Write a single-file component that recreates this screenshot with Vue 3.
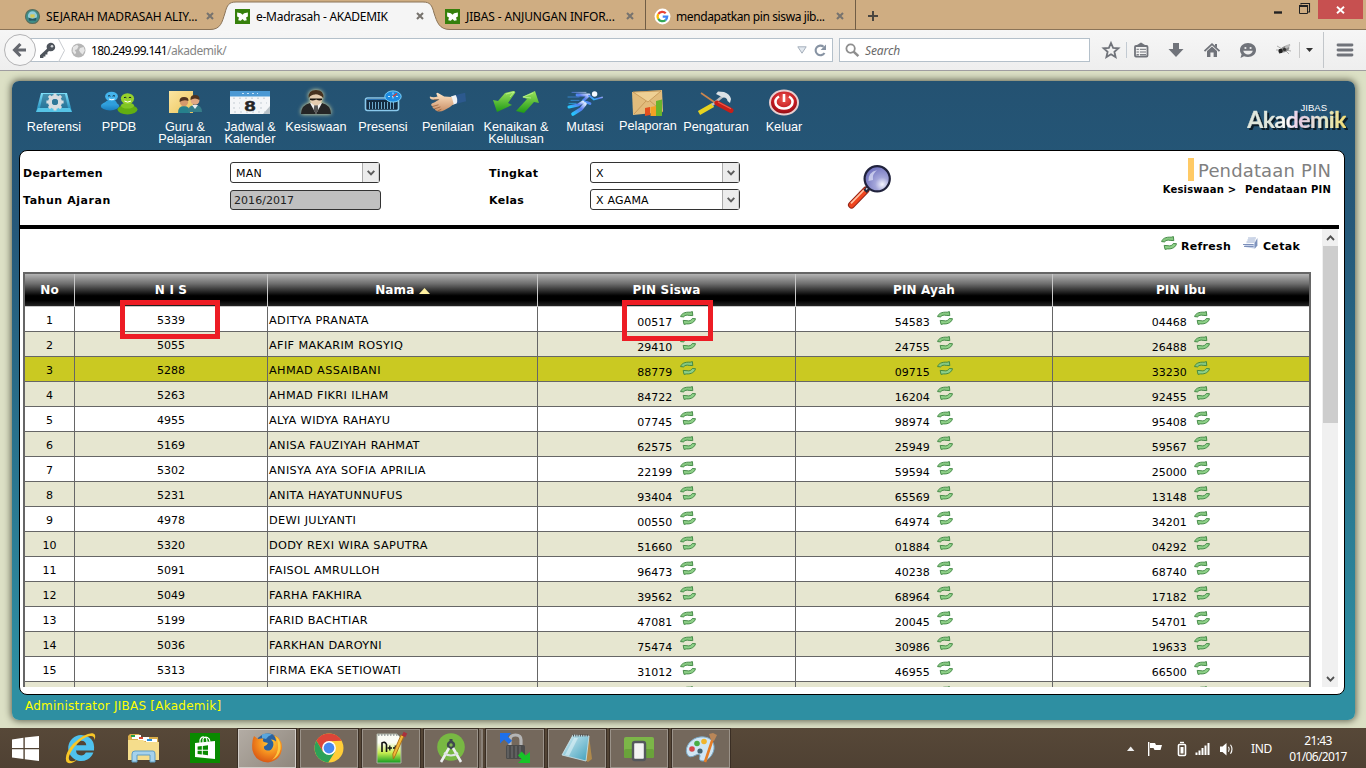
<script setup>
const rows = [
  ['5339', 'ADITYA PRANATA', '00517', '54583', '04468'],
  ['5055', 'AFIF MAKARIM ROSYIQ', '29410', '24755', '26488'],
  ['5288', 'AHMAD ASSAIBANI', '88779', '09715', '33230'],
  ['5263', 'AHMAD FIKRI ILHAM', '84722', '16204', '92455'],
  ['4955', 'ALYA WIDYA RAHAYU', '07745', '98974', '95408'],
  ['5169', 'ANISA FAUZIYAH RAHMAT', '62575', '25949', '59567'],
  ['5302', 'ANISYA AYA SOFIA APRILIA', '22199', '59594', '25000'],
  ['5231', 'ANITA HAYATUNNUFUS', '93404', '65569', '13148'],
  ['4978', 'DEWI JULYANTI', '00550', '64974', '34201'],
  ['5320', 'DODY REXI WIRA SAPUTRA', '51660', '01884', '04292'],
  ['5091', 'FAISOL AMRULLOH', '96473', '40238', '68740'],
  ['5049', 'FARHA FAKHIRA', '39562', '68964', '17182'],
  ['5199', 'FARID BACHTIAR', '47081', '20045', '54701'],
  ['5036', 'FARKHAN DAROYNI', '75474', '30986', '19633'],
  ['5313', 'FIRMA EKA SETIOWATI', '31012', '46955', '66500'],
  ['', '', '', '', '']
]
</script>

<template>
  <div class="screen">
    <svg class="defs" width="0" height="0">
      <defs>
        <linearGradient id="gGreen" x1="0" y1="0" x2="0" y2="1"><stop offset="0" stop-color="#5fb45c" /><stop offset=".5" stop-color="#98d690" /><stop offset="1" stop-color="#5aa85a" /></linearGradient>
        <linearGradient id="gBlue" x1="0" y1="0" x2="0" y2="1"><stop offset="0" stop-color="#7fe0fa" /><stop offset="1" stop-color="#1683b4" /></linearGradient>
        <linearGradient id="gBody" x1="0" y1="0" x2="0" y2="1"><stop offset="0" stop-color="#3cb0ea" /><stop offset="1" stop-color="#1a7fc0" /></linearGradient>
        <linearGradient id="gLime" x1="0" y1="0" x2="0" y2="1"><stop offset="0" stop-color="#9be25c" /><stop offset="1" stop-color="#1f9a16" /></linearGradient>
        <linearGradient id="gSand" x1="0" y1="0" x2="1" y2="1"><stop offset="0" stop-color="#fbe6a2" /><stop offset="1" stop-color="#edc55c" /></linearGradient>
        <linearGradient id="gSkin" x1="0" y1="0" x2="0" y2="1"><stop offset="0" stop-color="#ffe4c4" /><stop offset="1" stop-color="#c98f66" /></linearGradient>
        <linearGradient id="gRun" x1="0" y1="1" x2="1" y2="0"><stop offset="0" stop-color="#25c8ff" /><stop offset=".6" stop-color="#5a7cf0" /><stop offset="1" stop-color="#d8e6ff" /></linearGradient>
        <radialGradient id="gRed" cx=".5" cy=".35" r=".7"><stop offset="0" stop-color="#f05a50" /><stop offset=".6" stop-color="#c01820" /><stop offset="1" stop-color="#7c0a10" /></radialGradient>
        <radialGradient id="gLens" cx=".7" cy=".72" r=".8"><stop offset="0" stop-color="#f4f5ff" /><stop offset=".35" stop-color="#a4a6da" /><stop offset="1" stop-color="#6a6cba" /></radialGradient>
        <linearGradient id="gPage" x1="0" y1="0" x2="1" y2="1"><stop offset="0" stop-color="#d8f0f6" /><stop offset="1" stop-color="#3f9fbb" /></linearGradient>
        <linearGradient id="gNpp" x1="0" y1="0" x2="0" y2="1"><stop offset=".3" stop-color="#fbfcf4" /><stop offset=".65" stop-color="#c8ee50" /><stop offset="1" stop-color="#0f9a20" /></linearGradient>
        <radialGradient id="gFox" cx=".6" cy=".3" r=".8"><stop offset="0" stop-color="#ffcf3a" /><stop offset=".5" stop-color="#f38b1e" /><stop offset="1" stop-color="#d24a12" /></radialGradient>
      </defs>
      <symbol id="refresh" viewBox="0 0 16 14">
        <path d="M.6 5.6C1.4 2.6 4.6 .8 10.2 1.2L12.4 .6L12.8 4.6L9.2 4.4C6.6 3.8 5 4.2 3.6 5.9Z" fill="#86c880" stroke="#3b823e" stroke-width=".9" stroke-linejoin="round" />
        <path d="M15.5 7.7C14.8 10.8 11.6 13.3 6.4 12.9L4 13.4L3.2 9.4L7 9.7C9.6 10.3 11.2 9.4 12.3 7.5Z" fill="#8ed088" stroke="#3b823e" stroke-width=".9" stroke-linejoin="round" />
      </symbol>
      <symbol id="butterfly" viewBox="0 0 14 14">
        <rect width="14" height="14" fill="#36800c" />
        <path d="M2 3.2L5.5 4L7 5.4L8.5 4L12 3.2V7L10.3 8L11 10.4L8.6 11L7 9.4L5.4 11L3 10.4L3.7 8L2 7Z" fill="#fff" />
      </symbol>
      <symbol id="close" viewBox="0 0 8 8"><path d="M1 1L7 7M7 1L1 7" stroke="#77736e" stroke-width="2.1" fill="none" /></symbol>
      <symbol id="chev" viewBox="0 0 8 6"><path d="M.7 .8L4 4.4L7.3 .8" stroke="#5c5c5c" stroke-width="1.9" fill="none" /></symbol>
    </svg>

    <header class="tabs">
      <div class="tab">
        <svg class="fav" viewBox="0 0 14 14"><circle cx="7" cy="7" r="6.6" fill="#3e8d88" stroke="#5b6d5c" /><circle cx="7" cy="6.5" r="4.3" fill="#92cbd8" /><path d="M3 8Q7 10 11 8L10 11H4Z" fill="#245a62" /><path d="M5 5H9V8H5Z" fill="#d5c850" /></svg>
        <span class="tt t1">SEJARAH MADRASAH ALIY...</span>
        <svg class="cls"><use href="#close" /></svg>
      </div>
      <div class="tab active">
        <svg class="shape" width="240" height="31" viewBox="0 0 240 31"><path d="M0 31V29.5C11 29.5 12 22 15 13C17 5 19 2 26 2H213C220 2 222 5 224 13C227 22 229 29.5 240 29.5V31Z" fill="#f5f5f5" /><path d="M0 29.5C11 29.5 12 22 15 13C17 5 19 2 26 2H213C220 2 222 5 224 13C227 22 229 29.5 240 29.5" fill="none" stroke="#8b7458" /></svg>
        <svg class="fav"><use href="#butterfly" /></svg>
        <span class="tt t2">e-Madrasah - AKADEMIK</span>
        <svg class="cls"><use href="#close" /></svg>
      </div>
      <div class="tab">
        <svg class="fav"><use href="#butterfly" /></svg>
        <span class="tt t3">JIBAS - ANJUNGAN INFOR...</span>
        <svg class="cls"><use href="#close" /></svg>
      </div>
      <div class="tab sep">
        <svg class="fav" viewBox="0 0 14 14"><circle cx="7" cy="7" r="7.4" fill="#fff" /><g fill="none" stroke-width="2.1"><path d="M3.2 4.6A4.4 4.4 0 0 1 10 3.9" stroke="#ea4335" /><path d="M3.1 9.3A4.4 4.4 0 0 1 3.1 4.7" stroke="#fbbc05" /><path d="M3.1 9.2A4.4 4.4 0 0 0 9.8 10.3" stroke="#34a853" /><path d="M7.2 7H11.4A4.3 4.3 0 0 1 9.8 10.3" stroke="#4285f4" /></g></svg>
        <span class="tt t4">mendapatkan pin siswa jib...</span>
        <svg class="cls"><use href="#close" /></svg>
      </div>
      <div class="plus"><svg width="12" height="12"><path d="M6 1V11M1 6H11" stroke="#4a4640" stroke-width="2" /></svg></div>
      <div class="winbtns">
        <svg width="80" height="20" viewBox="0 0 80 20"><path d="M1 12.5H9" stroke="#222" stroke-width="2.4" /><path d="M26.5 5.5H34.5V13.5H26.5Z" stroke="#222" fill="none" /><path d="M26 6H35" stroke="#222" stroke-width="2" /><path d="M28 4.5V3.5H36.5V12H35" stroke="#222" stroke-width="1.1" fill="none" /></svg>
        <div class="x"><svg width="9" height="8" viewBox="0 0 9 8"><path d="M1 .8L8 7.2M8 .8L1 7.2" stroke="#fff" stroke-width="1.9" /></svg></div>
      </div>
    </header>

    <div class="nav">
      <div class="back"><svg width="16" height="16" viewBox="0 0 16 16"><path d="M8.4 2L2.6 8L8.4 14M3 8H14" fill="none" stroke="#65686f" stroke-width="3.2" /></svg></div>
      <div class="url">
        <svg class="key" width="17" height="17" viewBox="0 0 17 17"><path d="M1 16V13.2L8 6.8Q6.8 3.8 9.2 1.8Q12 -.2 14.8 2Q17.4 5 15.2 7.8Q13 10 10 9L8.4 10.6V12.4H6.4V14.4H4.4V16Z" fill="#4e545c" /><circle cx="13" cy="4.2" r="1.3" fill="#d5d8dc" /></svg>
        <svg class="crumb" width="9" height="23" viewBox="0 0 9 23"><path d="M1.5 0L7.5 11.5L1.5 23" fill="none" stroke="#c9ccd0" /></svg>
        <svg class="globe" width="15" height="15" viewBox="0 0 15 15"><circle cx="7.5" cy="7.5" r="7" fill="#b5b5b5" /><path d="M2 4L6 1.8L7.5 3.6L6 6.3L3.8 7L5.2 9.4L4 11.4L1.6 8.4ZM9 5L12.6 4L13.8 7.6L11.6 11.4L9.4 9.6L8 7.2Z" fill="#e6e6e6" /></svg>
        <span class="addr"><b>180.249.99.141</b>/akademik/</span>
        <svg class="drop" width="10" height="8" viewBox="0 0 10 8"><path d="M.8 .8H9.2L5 7.2Z" fill="#e3e9ef" stroke="#a6b0bc" /></svg>
        <svg class="reload" width="13" height="13" viewBox="0 0 13 13"><path d="M10.5 9A4.8 4.8 0 1 1 9.6 2.8" fill="none" stroke="#8793a3" stroke-width="2.1" /><path d="M12 .6V6H6.6Z" fill="#8793a3" /></svg>
      </div>
      <div class="search"><svg width="15" height="15" viewBox="0 0 15 15"><circle cx="5.6" cy="5.6" r="4.2" fill="none" stroke="#8e8e8e" stroke-width="1.8" /><path d="M8.6 8.6L13.4 13.2" stroke="#8e8e8e" stroke-width="2.5" /></svg><i>Search</i></div>
      <svg class="tools" width="276" height="40" viewBox="1090 30 276 40">
        <path d="M1111 43L1113.1 47.9L1118.4 48.3L1114.4 51.8L1115.6 57L1111 54.2L1106.4 57L1107.6 51.8L1103.6 48.3L1108.9 47.9Z" fill="none" stroke="#70737a" stroke-width="1.8" />
        <path d="M1126.5 42V58" stroke="#c2cad2" /><path d="M1299.5 42V58" stroke="#c8c8c8" /><path d="M1323.5 32V68" stroke="#c2c6ca" />
        <rect x="1135" y="46" width="12.5" height="10.5" rx="1" fill="none" stroke="#70737a" stroke-width="1.8" /><path d="M1137 45L1141 42.5L1145 45V46H1137Z" fill="#70737a" /><path d="M1136.5 49.3H1146M1136.5 52H1146M1136.5 54.6H1146" stroke="#70737a" /><path d="M1139.4 47V56" stroke="#f3f3f3" />
        <path d="M1173 43H1179V49H1183.5L1176 57L1168.5 49H1173Z" fill="#70737a" />
        <path d="M1204.5 51.2L1212 44.2L1219.5 51.2" fill="none" stroke="#70737a" stroke-width="1.8" /><path d="M1207 51L1212 46.5L1217 51V57H1213.6V52.5H1210.4V57H1207Z" fill="#70737a" /><path d="M1215 44H1217V48L1215 46Z" fill="#70737a" />
        <path d="M1248 43C1252.6 43 1256 46 1256 50S1252.6 57 1248 57C1246.5 57 1245.3 56.7 1244 56.2L1240.5 58L1241.6 54.2C1240.6 53 1240 51.6 1240 50C1240 46 1243.4 43 1248 43Z" fill="#70737a" /><circle cx="1245.4" cy="48" r="1.1" fill="#eee" /><circle cx="1250.6" cy="48" r="1.1" fill="#eee" /><path d="M1243.2 50.8H1252.8Q1251.5 54.6 1248 54.6T1243.2 50.8Z" fill="#eee" />
        <path d="M1277 46L1284 50L1289 45M1279 54L1283 50M1289 54L1285 50L1291 51M1276 50H1283M1290 44L1284 50" stroke="#999" stroke-width=".8" fill="none" /><ellipse cx="1285" cy="49" rx="4.6" ry="2.8" transform="rotate(-28 1285 49)" fill="#8a8a8a" /><circle cx="1280.6" cy="51" r="2.2" fill="#222" /><circle cx="1284.6" cy="49.4" r="1.7" fill="#333" /><ellipse cx="1287.4" cy="46.6" rx="3" ry="1.5" transform="rotate(-30 1287 46)" fill="#bcbcbc" />
        <path d="M1306 48H1313L1309.5 52Z" fill="#333" />
        <path d="M1338 45H1352M1338 50H1352M1338 55H1352" stroke="#70737a" stroke-width="2.8" stroke-linecap="round" />
      </svg>
    </div>

    <main class="page">
      <div class="panel">
        <div class="menu">
          <div class="item"><svg viewBox="0 0 38 30"><path d="M6 3H32L37 22H1Z" fill="url(#gBlue)" /><path d="M8 4H30L33 18H5Z" fill="#245f7e" opacity=".6" /><path d="M3 18H35L37 22H1Z" fill="#56c4e6" /><circle cx="20" cy="12" r="5" fill="none" stroke="#d8dde0" stroke-width="4" /><path d="M20 3.4V6M20 18V20.6M11.4 12H14M26 12H28.6M13.9 5.9L15.8 7.8M24.2 16.2L26.1 18.1M26.1 5.9L24.2 7.8M15.8 16.2L13.9 18.1" stroke="#d8dde0" stroke-width="3" /><circle cx="20" cy="12" r="3" fill="#2e7798" /></svg><span>Referensi</span></div>
          <div class="item"><svg viewBox="0 0 38 30"><ellipse cx="10" cy="16" rx="9.2" ry="4.4" fill="url(#gBody)" /><ellipse cx="11" cy="12.6" rx="5.6" ry="2.6" fill="#2f9fdc" /><ellipse cx="11.5" cy="6.5" rx="6.4" ry="4.8" fill="#44b4ec" /><ellipse cx="27.5" cy="19.6" rx="10" ry="4.8" fill="#62ae12" /><ellipse cx="27.5" cy="15.6" rx="6.6" ry="3" fill="#80c524" /><ellipse cx="27.5" cy="8.6" rx="6.6" ry="5.4" fill="#96d22c" /><path d="M8 6.2Q9 5 10.4 6.2M12.6 6.2Q14 5 15 6.2M24 7.8Q25 6.6 26.4 7.8M28.8 7.8Q30 6.6 31.2 7.8" stroke="#123" fill="none" /><path d="M9 9Q12 10.6 14.6 9M24.4 11Q27.5 13.2 31 11" stroke="#fff" fill="none" /></svg><span>PPDB</span></div>
          <div class="item"><svg viewBox="0 0 38 30"><rect x="3" y="1" width="24" height="22" fill="url(#gSand)" /><path d="M12 23Q12 16 18 16T24 23Z" fill="#26818c" /><circle cx="18" cy="12" r="4.2" fill="#d59a6c" /><path d="M13.6 12Q13 7 18 7T22.4 11Q18 9 13.6 12Z" fill="#503420" /><path d="M22 22Q22 15 29 15T36 22Z" fill="#367e8a" /><path d="M26 15L29 19L32 15Z" fill="#e9eff2" /><circle cx="29" cy="10.4" r="4.4" fill="#e2a983" /><path d="M24.5 10Q24 5 29 5T33.4 10Q29 7 24.5 10Z" fill="#503420" /></svg><span>Guru &amp;<br>Pelajaran</span></div>
          <div class="item"><svg viewBox="0 0 38 30"><rect x="-1" y="1" width="40" height="23" fill="#f4f6f8" /><rect x="-1" y="1" width="40" height="5.5" fill="#4b99d4" /><path d="M11 3.5H27" stroke="#c6e2f7" stroke-dasharray="2 3" /><path d="M2 8.2H36M2 13H9M29 13H36M2 18H9M29 18H33M3 22H34" stroke="#c3cbd2" stroke-dasharray="2 4" /><path d="M39 16V24H32Z" fill="#b9c2c8" /><text x="19" y="20.5" text-anchor="middle" font-family="Liberation Sans" font-size="15" font-weight="700" textLength="11" lengthAdjust="spacingAndGlyphs" stroke="#262626" stroke-width=".5" fill="#262626">8</text></svg><span>Jadwal &amp;<br>Kalender</span></div>
          <div class="item"><svg class="glow" viewBox="0 0 38 30"><path d="M4 24Q4 15 13 13H25Q34 15 34 24Z" fill="#252525" /><path d="M13 13L19 24L25 13Z" fill="#eee" /><path d="M17.5 14H20.5L21.4 20L19 24L16.6 20Z" fill="#555" /><ellipse cx="19" cy="8.5" rx="6.2" ry="7" fill="#e4ccb0" /><path d="M11.6 8Q11 0 19 0T26.4 8Q22 4 18 4.4Q14 4.5 11.6 8Z" fill="#46311f" /><path d="M13 8.6H25V10Q22 11 19.2 9.4Q16 11 13 10Z" fill="#16120e" /></svg><span>Kesiswaan</span></div>
          <div class="item"><svg viewBox="0 0 38 30"><rect x="1.5" y="8" width="33" height="12.5" rx="2" fill="#142a40" stroke="#8ac9ec" stroke-width="1.6" /><path d="M5 15.5H32" stroke="#6ca7ca" stroke-width="7" stroke-dasharray="1 2" /><path d="M3 9.5H25" stroke="#2b74b6" /><ellipse cx="29" cy="6.5" rx="8.2" ry="5.6" fill="#1e8be0" stroke="#7fd4fb" /><path d="M24 6.5H34M29 2.5V10.5" stroke="#bfe8ff" stroke-dasharray="2 2" /><path d="M29 6.5L33 3.5" stroke="#e53a2a" stroke-width="1.4" /></svg><span>Presensi</span></div>
          <div class="item"><svg viewBox="0 0 40 30"><path d="M26 5L38 2L39 11L28 14Z" fill="#2c598e" /><path d="M23 6L28 4.4Q31 9 29 13.5L24.5 15Z" fill="#f1f3f5" /><path d="M1 6Q0 9 5 9.5L11 9L6 12L3 13.5Q1 15.5 4 16.5Q3 18.5 6 19Q6 21 9 21.5Q12 22.5 16 20.5Q22 18 26 14L24 6.5L16 6L10 2.5Q7 1.4 8 4L9 6Q5 7.5 1 6Z" fill="url(#gSkin)" /><path d="M4 16.5L10 14.8M6 19L12 17M9 21.3L13 19.4M5 9.5H10" stroke="#96603c" stroke-width=".8" /></svg><span>Penilaian</span></div>
          <div class="item"><svg class="wide" viewBox="0 0 46 30"><path d="M12 3L20 1Q23 1 22 3L15 13L19 15L4 22L0 10L5 11Z" fill="url(#gLime)" /><path d="M42 1L46 13L41 12L31 23L23 21L34 9L29 7Z" fill="url(#gLime)" /><path d="M13 4L21 2L17 7M40 3L30 7L38 8" stroke="#d4ffab" fill="none" opacity=".6" /></svg><span>Kenaikan &amp;<br>Kelulusan</span></div>
          <div class="item"><svg viewBox="0 0 38 30"><g fill="none" stroke="url(#gRun)" stroke-linejoin="round" stroke-linecap="round"><path d="M11 5L23 5L17 11L24 13.5" stroke-width="2.8" /><path d="M23 5.5L28 9.5L36 7.5" stroke-width="1.8" /><path d="M17 12L12 15L3 17" stroke-width="3" /><path d="M19 14L15 19L7 24" stroke-width="3.6" /><path d="M6 2.4H20M2 7H13M5 10.4H13M3 13.4H10" stroke-width=".8" opacity=".8" /></g><circle cx="28.6" cy="4" r="2.7" fill="#f6faff" /></svg><span>Mutasi</span></div>
          <div class="item up"><svg viewBox="0 0 38 30"><path d="M3 2L33 0L34 22L4 25Z" fill="#e2bc7c" /><path d="M4 2L19 12L32 1Z" fill="#efd094" stroke="#bd8d4c" stroke-width=".7" /><path d="M5 24L17 11M34 22L21 11" stroke="#bd8d4c" stroke-width=".7" /><path d="M16 18L21 17V25L16 26Z" fill="#e34e1e" /><path d="M21.5 17L27 16V26H21.5Z" fill="#f5a124" /><path d="M27 11L33 9.5V26H27Z" fill="#69b42b" /></svg><span>Pelaporan</span></div>
          <div class="item"><svg viewBox="0 0 38 30"><path d="M16 15L2 23" stroke="#e6d321" stroke-width="4.4" /><path d="M15 15L26 6" stroke="#b9bfc4" stroke-width="2.4" /><path d="M19 4L21 1.5L27 2Q33 4 34 9L33 13L30.5 11Q30 7 26 7.5Z" fill="#dce2e6" /><path d="M4 3L20 14" stroke="#c9854e" stroke-width="1.6" /><path d="M20 13L34 20.5" stroke="#c71f18" stroke-width="5" stroke-linecap="round" /><path d="M21 12L34 18.8" stroke="#ed5d4b" stroke-width="1.2" /></svg><span>Pengaturan</span></div>
          <div class="item"><svg viewBox="0 0 38 30"><ellipse cx="19" cy="12.5" rx="14" ry="12" fill="url(#gRed)" stroke="#e9cfd0" stroke-width="2" /><path d="M14 6.5Q9 9.5 11 14.5Q13.5 18.5 19 18.5T27 14.5Q29 9.5 24 6.5" fill="none" stroke="#fff" stroke-width="2.5" /><path d="M19 4V12" stroke="#fff" stroke-width="2.6" /></svg><span>Keluar</span></div>
          <div class="logo"><small>JIBAS</small><strong>Akademik</strong></div>
        </div>

        <div class="content">
          <div class="filters">
            <label class="lb">Departemen</label><div class="sel"><span>MAN</span><i><svg width="8" height="6"><use href="#chev" /></svg></i></div>
            <label class="lb c3">Tingkat</label><div class="sel"><span>X</span><i><svg width="8" height="6"><use href="#chev" /></svg></i></div>
            <label class="lb ta">Tahun Ajaran</label><div class="inp">2016/2017</div>
            <label class="lb c3">Kelas</label><div class="sel"><span>X AGAMA</span><i><svg width="8" height="6"><use href="#chev" /></svg></i></div>
            <svg class="mag" width="46" height="46" viewBox="0 0 46 46"><path d="M19 26L4.5 41" stroke="#8f2418" stroke-width="7" stroke-linecap="round" /><path d="M18.6 26.4L4.5 41" stroke="#f0451e" stroke-width="5.2" stroke-linecap="round" /><path d="M17 26L4 39.4" stroke="#ffc3a4" stroke-width="1.7" /><path d="M22.5 23L18 27.4" stroke="#27293c" stroke-width="4.5" /><path d="M22 22.5L19 25.5" stroke="#d8dce8" stroke-width="1.4" /><circle cx="30.2" cy="14.8" r="12.6" fill="url(#gLens)" stroke="#20223c" stroke-width="2.2" /><path d="M21.5 17Q21 8 30 6.2Q25 10 26 16Z" fill="#e0e2f8" opacity=".7" /></svg>
            <div class="head"><div class="ttl">Pendataan PIN</div><div class="bc">Kesiswaan &gt; <span>Pendataan PIN</span></div></div>
          </div>

          <div class="frame">
            <div class="body">
              <div class="acts">
                <svg class="rf" width="16" height="14"><use href="#refresh" /></svg><b class="a1">Refresh</b>
                <svg class="pr" width="16" height="14" viewBox="0 0 16 14"><path d="M5 3L12 1L11 7L3 8Z" fill="#eef2fa" /><path d="M5 2H13M4.5 4H12.4M3.5 6H12" stroke="#9fb0d0" stroke-width=".9" /><path d="M1 8H11L14 5V9.5L11 12.5L2 11Z" fill="#c4d0e8" /><path d="M0 8.5H10.5M1 10.5H10.5" stroke="#7488b4" stroke-width=".9" /><path d="M11.6 13V7L14.4 2V9.4Z" fill="#7e93bd" /></svg><b class="a2">Cetak</b>
              </div>
              <div class="table">
                <div class="tr th"><div>No</div><div class="nis">N I S</div><div>Nama <svg width="11" height="6"><path d="M0 6L5.5 0L11 6Z" fill="#fff0a0" /></svg></div><div>PIN Siswa</div><div>PIN Ayah</div><div>PIN Ibu</div></div>
                <div v-for="(r, i) in rows" :key="i" class="tr" :class="{ alt: i % 2 === 1, hot: i === 2 }">
                  <div>{{ r[0] ? i + 1 : '' }}</div>
                  <div>{{ r[0] }}</div>
                  <div class="name">{{ r[1] }}</div>
                  <div v-for="k in [2, 3, 4]" :key="k" class="pin"><span>{{ r[k] }}</span><svg width="16" height="14"><use href="#refresh" /></svg></div>
                </div>
              </div>
            </div>
            <div class="scroll"><svg class="arr" width="9" height="6" viewBox="0 0 9 6"><path d="M1 5L4.5 1.4L8 5" fill="none" stroke="#505050" stroke-width="1.8" /></svg><div class="thumb"></div><svg class="arr" width="9" height="6" viewBox="0 0 9 6"><path d="M1 1L4.5 4.6L8 1" fill="none" stroke="#505050" stroke-width="1.8" /></svg></div>
          </div>
        </div>
        <div class="status">Administrator JIBAS [Akademik]</div>
      </div>
      <div class="mark m1"></div>
      <div class="mark m2"></div>
    </main>

    <footer class="taskbar">
      <div class="pin1"><svg width="27" height="25" viewBox="0 0 27 25"><path d="M0 3.4L11.4 1.8V12H0ZM12.8 1.6L27 0V12H12.8ZM0 13.2H11.4V23L0 21.6ZM12.8 13.2H27V25L12.8 23.2Z" fill="#fff" /></svg></div>
      <div class="pin2"><svg width="32" height="32" viewBox="0 0 32 32"><path d="M16 3A13 13 0 1 0 28.4 20.5H20.8Q19.4 23.4 16.2 23.4Q11.4 23.2 11 18.4H29Q30.5 4.5 16 3ZM11.3 13.2Q12.2 9 16.5 8.8Q20.8 9 21.3 13.2Z" fill="#4fc2ee" /><path d="M1.6 30Q-1.5 23 8 12Q20 .5 27.6 1.2Q31.6 2 29.5 8Q29.4 3.4 25 4Q18 5 9.6 14.5Q1.6 25 4.6 28.6Q7 30.5 12 27.4Q6 33.4 1.6 30Z" fill="#f8c727" /></svg></div>
      <div class="pin3"><svg width="33" height="32" viewBox="0 0 33 32"><path d="M1 4L3 2H12L14 5H31L32 28H1Z" fill="#d9ad49" /><path d="M5 3H14V7H5Z" fill="#fff" /><path d="M4 3H8V5H4Z" fill="#27a045" /><path d="M11 5H22V9H11Z" fill="#fff" /><path d="M12 5H16V7H12Z" fill="#d94830" /><path d="M19 7H30V10H19Z" fill="#fff" /><path d="M20 7H25V9H20Z" fill="#2a8fdc" /><path d="M1 8H16L18 10H32V28H1Z" fill="#f5dd8c" /><path d="M5 30V22Q5 19 8 19H26Q28 19 28 22V30H23V23H10V30Z" fill="#a5d2ec" stroke="#5f9dc4" /></svg></div>
      <div class="pin4"><svg width="30" height="30" viewBox="0 0 30 30"><rect width="30" height="30" fill="#098a00" /><path d="M5 10L25 8V26L5 24Z" fill="#fff" /><path d="M10 10V7Q11 3.5 14 4Q17 4 17 9M13 10V6Q14.5 3.5 17.5 4.5Q19.8 5.5 20 8.8" fill="none" stroke="#fff" stroke-width="1.2" /><path d="M7.6 13.5L11.8 13V16.8H7.6ZM12.8 12.9L18 12.3V16.8H12.8ZM7.6 17.8H11.8V21.5L7.6 21ZM12.8 17.8H18V22.2L12.8 21.6Z" fill="#098a00" /></svg></div>
      <div class="tb on"><svg width="32" height="32" viewBox="0 0 32 32"><circle cx="17" cy="14.5" r="13" fill="#2a62a0" /><path d="M11 2.4Q16 .6 21 2.6Q17 4 15 7L11 6Z" fill="#5aa6dc" /><path d="M3 4L7 7Q9 6 12.6 6.6Q11 8.5 13 10L17 11Q16 13.4 13 14.4Q12.4 18 16.6 18.6Q20.6 18.6 22 14.4Q23.4 10.4 20 7.6Q23 7.4 25 9.4Q25 5 21.6 2.6Q31.4 6 31 16Q30 28.6 17 30.4Q4 29.6 1.4 18Q.4 9 3 4Z" fill="url(#gFox)" /><path d="M24 4Q30.6 8.6 29.6 17Q28 25 21 28Q27 22 27 15Q27 8 24 4Z" fill="#ffd94a" opacity=".8" /></svg></div>
      <div class="tb"><svg width="30" height="30" viewBox="0 0 30 30"><circle cx="15" cy="15" r="14.5" fill="#ffcd38" /><path d="M2.4 7.8A14.5 14.5 0 0 1 27.6 7.8L15 8.2L8.8 18.6Z" fill="#dd4538" /><path d="M2.4 7.8A14.5 14.5 0 0 0 14.2 29.5L21.2 18.6L8.8 18.6Z" fill="#2ca258" /><circle cx="15" cy="15" r="6.9" fill="#fff" /><circle cx="15" cy="15" r="5.4" fill="#4688f0" /></svg></div>
      <div class="tb"><svg width="32" height="32" viewBox="0 0 32 32"><path d="M2 2H22L26 6V31H2Z" fill="url(#gNpp)" stroke="#aab1a2" /><path d="M3 3H24" stroke="#8d9291" stroke-width="1.4" stroke-dasharray="1.5 1.5" /><path d="M7 20V11Q10 9 11.5 12.5V20" stroke="#111" fill="none" stroke-width="1.6" /><path d="M12.5 16H17M14.8 13.6V18.4M18 16H22.5M20.3 13.6V18.4" stroke="#111" stroke-width="1.3" /><path d="M29 4L20.5 23L18.4 27L17.8 22L26 3Z" fill="#f2b83a" stroke="#a96b12" stroke-width=".9" /><path d="M30.4 .6L28.6 4.4" stroke="#a9303c" stroke-width="4" /></svg></div>
      <div class="tb two"><svg width="30" height="32" viewBox="0 0 30 32"><circle cx="15" cy="15" r="13.8" fill="#78b843" /><path d="M15 7V13" stroke="#3e4a50" stroke-width="3" /><circle cx="15" cy="13" r="4.2" fill="#3f494e" /><circle cx="15" cy="13" r="1.7" fill="#80b650" /><path d="M13 16L5 30M17 16L25 30" stroke="#ecefef" stroke-width="2.6" /><path d="M8 21Q15 26 22 21" fill="none" stroke="#dde2e2" stroke-width="2.2" /></svg></div>
      <div class="tb"><svg width="32" height="32" viewBox="0 0 32 32"><path d="M11 14V8Q11 3 16.5 3T22 8V14" fill="none" stroke="#b5b5b5" stroke-width="3.2" /><rect x="7" y="13" width="19" height="14" rx="1.5" fill="#4b4b4b" /><path d="M9 14V26M13 14V26M17 14V26M21 14V26" stroke="#757575" /><path d="M1 1H12L8.6 4.4L13 8.8L9.8 12L5.2 7.6L1 11.6Z" fill="#1d70ec" /><path d="M31 31H19L22.8 27.2L19 23.4L22.6 19.6L26.6 23.4L31 20Z" fill="#18c428" /></svg></div>
      <div class="tb"><svg width="32" height="32" viewBox="0 0 32 32"><path d="M28 4L31 27L27 30L24 28Z" fill="#b08a4c" /><path d="M12 3L28 4L25 29L1 23Z" fill="url(#gPage)" stroke="#cfe6ec" stroke-width=".8" /><path d="M12 3.4H28" stroke="#4b4d4e" stroke-width="2.2" stroke-dasharray="1 1.3" /><path d="M13 6L17 6L8 24L4 23Z" fill="#ecf8fc" opacity=".5" /></svg></div>
      <div class="tb"><svg width="30" height="26" viewBox="0 0 30 26"><rect y="2" width="30" height="21" rx="2" fill="#7cb648" /><rect y="14" width="30" height="9" rx="2" fill="#6aa33a" /><rect x="9" y="7" width="12" height="18" rx="2" fill="#f3f3f3" stroke="#54575d" stroke-width="2.4" /></svg></div>
      <div class="tb"><svg width="32" height="32" viewBox="0 0 32 32"><path d="M15 5C24 4 30 9 29 17C28 24 22 29 18 29Q13 29 15 24Q15 21 11 23Q4 27 2 22C-1 15 6 6 15 5Z" fill="#cfe6f5" stroke="#79a7c4" /><circle cx="15" cy="19" r="2.6" fill="#446472" /><circle cx="7" cy="17" r="2.8" fill="#d5484b" /><circle cx="12" cy="11.5" r="2.8" fill="#49ad45" /><circle cx="19" cy="9.5" r="2.8" fill="#f0b52c" /><path d="M28 6L20 30" stroke="#e57d26" stroke-width="2.6" /><path d="M26 8L24 2L28 1L32 3L29 9Z" fill="#b98658" /></svg></div>
      <svg class="tray" width="110" height="40" viewBox="1126 728 110 40">
        <path d="M1127 751L1130.7 746.5L1134.4 751Z" fill="#eee" /><path d="M1148.7 742V756" stroke="#fff" stroke-width="1.4" /><path d="M1150 743H1155L1156 745H1162L1160.5 750H1154.5L1153.5 748H1150Z" fill="#fff" /><rect x="1178.5" y="744.5" width="7" height="11" rx="1" fill="none" stroke="#fff" stroke-width="1.6" /><path d="M1180 742.5H1184" stroke="#fff" stroke-width="1.4" /><rect x="1180.5" y="747" width="3" height="6.5" fill="#fff" />
        <path d="M1196.5 755V752.5M1199.5 755V750.5M1202.5 755V748M1205.5 755V745.5M1208.5 755V743" stroke="#fff" stroke-width="2" /><path d="M1220 746.5H1222.5L1226.5 743V755.5L1222.5 752H1220Z" fill="#fff" /><path d="M1228.5 746.8Q1230 749.2 1228.5 751.8M1230.5 744.8Q1233.5 749.2 1230.5 753.8" stroke="#fff" fill="none" stroke-width="1.1" />
      </svg>
      <span class="ind">IND</span>
      <div class="clock"><span>21:43</span><span>01/06/2017</span></div>
    </footer>
  </div>
</template>

<style>
body { margin: 0; overflow: hidden; }
</style>

<style scoped>
.screen { width: 1366px; height: 768px; overflow: hidden; display: flex; flex-direction: column; position: relative; font-family: "DejaVu Sans", sans-serif; font-size: 11px; color: #000; }
.screen * { box-sizing: border-box; }
.defs { position: absolute; }
svg { display: block; flex: none; overflow: visible; }
span, label { white-space: nowrap; }

.tabs { height: 30px; background: #cfad82; border-bottom: 1px solid #8b7458; display: flex; padding-left: 15px; flex: none; }
.tab { width: 210px; height: 30px; display: flex; align-items: center; padding: 2px 0 0 10px; position: relative; }
.tab.sep { border-left: 1px solid #705d45; border-right: 1px solid #705d45; padding-left: 9px; width: 211px; }
.fav { width: 15px; height: 15px; margin-right: 6px; }
.tt { font: 12px "Noto Sans", sans-serif; width: 155px; }
.t1 { letter-spacing: -0.13px; }
.t2 { letter-spacing: -0.28px; }
.t3 { letter-spacing: -0.13px; }
.t4 { letter-spacing: -0.4px; }
.cls { width: 8px; height: 8px; margin-left: 5px; position: relative; }
.shape { position: absolute; left: -15px; top: 0; }
.active .fav, .active .tt { position: relative; }
.plus { padding: 10px 0 0 11px; }
.winbtns { margin-left: auto; display: flex; padding-right: 3px; }
.winbtns > svg { width: 80px; margin-right: -35px; }
.x { width: 45px; height: 19px; background: #c75050; display: flex; align-items: center; justify-content: center; }

.nav { height: 41px; background: linear-gradient(#f6f6f6, #eee); border-bottom: 1px solid #9f9da0; flex: none; display: flex; align-items: center; padding-left: 4px; }
.back { width: 32px; height: 32px; border: 1px solid #b3b3b5; border-radius: 50%; background: #f7f7f7; display: flex; align-items: center; justify-content: center; z-index: 1; flex: none; }
.url { width: 805px; height: 24px; margin-left: -8px; border: 1px solid #b4c0ca; background: #fff; display: flex; align-items: center; padding-left: 10px; font: 12px "Noto Sans", sans-serif; }
.crumb { margin-left: 1px; }
.globe { margin-left: 5px; }
.addr { margin-left: 5px; color: #858585; letter-spacing: -0.45px; }
.addr b { font-weight: 400; color: #000; letter-spacing: -0.65px; }
.drop { margin-left: auto; }
.reload { margin: 0 5px 0 7px; }
.search { width: 251px; height: 24px; margin-left: 6px; border: 1px solid #b4c0ca; background: #fff; display: flex; align-items: center; gap: 5px; padding-left: 5px; font: 12px "Noto Sans", sans-serif; color: #696969; letter-spacing: -0.1px; }

.page { flex: 1; background: #dce0c5; padding: 10px 11px 0 12px; position: relative; min-height: 0; }
.panel { height: 639px; border-radius: 7px; background: linear-gradient(#245272 0, #25597a 24%, #2e8fa2 94%); box-shadow: 0 0 7px 1px #5c5e4c; display: flex; flex-direction: column; padding: 0 10px 0 7px; }
.menu { height: 69px; flex: none; display: grid; grid-template-columns: 64px 66px 66px 64px 68px 66px 64px 72px 66px 60px 76px 60px 1fr; padding-left: 3px; }
.item { display: flex; flex-direction: column; align-items: center; padding-top: 9px; color: #fff; font: 12.7px/12px "Liberation Sans", sans-serif; text-align: center; }
.item svg { width: 38px; height: 30px; flex: none; }
.item span { margin-top: 1px; }
.item svg.wide { width: 46px; }
.item.up span { margin-top: 0; }
.glow { filter: drop-shadow(0 0 2px #f7efaa); }
.logo { color: #fff; text-align: right; display: flex; flex-direction: column; padding: 22px 0 0; align-items: flex-end; }
.logo small { font: 9.5px/10px "Liberation Sans", sans-serif; margin-right: 18px; }
.logo strong { font: 700 23px/18px Lato, sans-serif; letter-spacing: -0.5px; margin: -3px -1px 0 0; background: linear-gradient(90deg, #dfe6dc 0 25%, #fff 40%, #e5c9e2 52%, #e2e8cf 78%, #f4dc72 100%); background-clip: text; color: transparent; filter: drop-shadow(2px 2px 0 #0b1c28); -webkit-text-stroke: 0.4px transparent; }

.content { height: 545px; flex: none; background: #fff; border: 1px solid #000; border-radius: 8px; display: flex; flex-direction: column; }
.filters { height: 78px; border-bottom: 4px solid #000; margin-right: 5px; display: grid; grid-template-columns: 210px 259px 101px 151px; grid-template-rows: 27px 27px; padding: 8px 0 0; position: relative; align-items: center; flex: none; }
.lb { font-weight: 700; padding: 1px 0 0 3px; letter-spacing: 0.32px; }
.lb.c3 { padding-left: 0; }
.lb.ta { letter-spacing: 0.55px; }
.sel { width: 150px; height: 21px; border: 1px solid #333; border-radius: 3px; display: flex; align-items: center; justify-content: space-between; padding-left: 5px; }
.sel span { padding-top: 1px; letter-spacing: 0.2px; }
.sel i { width: 17px; height: 19px; border-left: 1px solid #aaa; border-right: 1px solid #ccc; background: #ececec; display: flex; align-items: center; justify-content: center; }
.inp { width: 151px; height: 20px; border: 1px solid #333; border-radius: 3px; background: #c0c0c0; padding-left: 3px; line-height: 19px; color: #222; letter-spacing: 0.05px; }
.mag { position: absolute; left: 827px; top: 13px; }
.head { position: absolute; right: 8px; top: 7px; text-align: right; }
.ttl { font-size: 18px; line-height: 25px; color: #808080; border-left: 6px solid #ffca65; padding-left: 4px; margin-left: auto; width: max-content; height: 23px; white-space: nowrap; letter-spacing: 0.15px; }
.bc { font-size: 10px; font-weight: 700; margin-top: 3px; white-space: nowrap; letter-spacing: 0.2px; }
.bc span { margin-left: 5px; }

.frame { height: 458px; display: flex; margin-right: 6px; overflow: hidden; }
.body { flex: 1; padding-left: 3px; }
.acts { height: 43px; display: flex; align-items: flex-start; padding: 7px 21px 0 0; justify-content: flex-end; font-size: 11px; letter-spacing: 0.3px; }
.acts b { line-height: 14px; }
.acts .a1 { margin: 4px 12px 0 4px; width: 50px; }
.acts .a2 { margin: 4px 0 0 4px; width: 38px; }
.table { width: 1288px; border: 2px solid #666; }
.tr { display: grid; grid-template-columns: 50px 193px 270px 258px 257px 256px; height: 25px; background: #fff; }
.tr > div { border-right: 1px solid #666; border-bottom: 1px solid #666; line-height: 27px; text-align: center; overflow: hidden; white-space: nowrap; }
.tr > div:last-child { border-right: 0; }
.tr.th { height: 33px; background: linear-gradient(#b4b4b4 0, #6d6d6d 30%, #000 66%, #000 80%, #2a2a2a 100%); color: #fff; font-weight: 700; font-size: 12px; letter-spacing: 0.15px; }
.tr.th > div { border-color: #c8c8c8; line-height: 33px; }
.th svg { display: inline-block; }
.tr.alt { background: #e6e6d0; }
.tr.hot { background: #cac922; }
.tr .name { text-align: left; padding-left: 1px; font-size: 11.3px; letter-spacing: 0.35px; }
.tr .pin { display: flex; justify-content: center; align-items: flex-start; gap: 7.4px; }
.pin span { line-height: 31px; }
.pin svg { margin-top: 4px; }
.pin span:empty { width: 35px; }
.scroll { width: 16px; background: #f0f0f0; display: flex; flex-direction: column; justify-content: space-between; align-items: center; padding: 6px 0 5px; }
.thumb { width: 15px; height: 177px; background: #cdcdcd; margin: 5px 0 auto; }
.status { color: #ff0; font-size: 12px; padding: 4px 0 0 6px; letter-spacing: 0.24px; }

.mark { position: absolute; border: 5px solid #ed1c24; }
.m1 { left: 120px; top: 229px; width: 100px; height: 39px; }
.m2 { left: 622px; top: 229px; width: 91px; height: 41px; }

.taskbar { height: 40px; background: linear-gradient(#574838, #4f4133); flex: none; display: flex; align-items: center; position: relative; z-index: 2; font: 12px "Noto Sans", sans-serif; color: #fff; }
.pin1 { width: 65px; padding-left: 12px; }
.pin2 { width: 62px; }
.pin3 { width: 63px; }
.pin4 { width: 48px; }
.tb { width: 58px; height: 39px; margin-right: 4px; border: 1px solid #9b938a; outline: 1px solid #3a2e24; background: #74685c; display: flex; align-items: center; justify-content: center; flex: none; }
.tb.on { background: linear-gradient(135deg, #b3aca4, #8f877d); border-color: #d2cdc8; }
.tb.two { width: 54px; margin-right: 8px; box-shadow: 4px 0 0 -1px #74685c, 5px 0 0 0 #8a8178; }
.tray { margin-left: auto; }
.ind { margin-left: 15px; width: 21px; letter-spacing: -0.4px; }
.clock { width: 94px; display: flex; flex-direction: column; text-align: center; line-height: 16px; letter-spacing: -0.65px; padding: 2px 2px 0 0; }
</style>
